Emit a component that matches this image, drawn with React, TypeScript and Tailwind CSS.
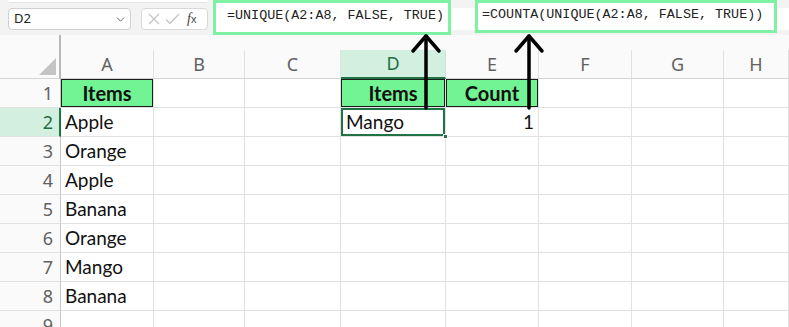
import { ChevronDown } from 'lucide-react';

const cols = ['A', 'B', 'C', 'D', 'E', 'F', 'G', 'H'];
const rows = [1, 2, 3, 4, 5, 6, 7, 8, 9];
const items = ['Apple', 'Orange', 'Apple', 'Banana', 'Orange', 'Mango', 'Banana'];

const Arrow = ({ x }: { x: number }) => (
  <svg className="absolute top-0 left-0 pointer-events-none" width="789" height="327">
    <line x1={x} y1={36} x2={x} y2={108} stroke="#000" strokeWidth="3.5" strokeLinecap="round" />
    <polyline
      points={`${x - 13},${51} ${x},${36} ${x + 13},${51}`}
      fill="none"
      stroke="#000"
      strokeWidth="3.5"
      strokeLinecap="round"
      strokeLinejoin="round"
    />
  </svg>
);

const Cell = ({ children, className = '' }: { children?: React.ReactNode; className?: string }) => (
  <div className={`h-[29px] border-r border-b border-[#e1e1e1] flex items-center ${className}`}>{children}</div>
);

export default function App() {
  return (
    <div className="relative w-[789px] h-[327px] overflow-hidden bg-white font-['Lato',sans-serif] text-[19px] text-[#111]">
      {/* formula bar */}
      <div className="relative h-[35px] bg-[#f3f3f3] flex items-start">
        <div className="absolute top-0 left-[8px] w-[200px] h-[3px] bg-white rounded-b-md border-b border-[#e4e4e4]" />
        <div className="ml-[8px] mt-[8px] w-[123px] h-[22px] bg-white border border-[#d0d0d0] rounded-[4px] flex items-center justify-between pl-[5px] pr-[3px]">
          <span className="font-['Noto_Sans',sans-serif] text-[13px] text-[#222]">D2</span>
          <ChevronDown className="w-[13px] h-[13px] text-[#555]" strokeWidth={1.6} />
        </div>
        <div className="ml-[10px] mt-[8px] w-[67px] h-[22px] bg-white border border-[#d8d8d8] rounded-[4px] flex items-center pl-[6px] gap-[5px]">
          <svg width="12" height="12" viewBox="0 0 12 12">
            <path d="M1 1L11 11M11 1L1 11" stroke="#c4c4c4" strokeWidth="1.3" />
          </svg>
          <svg width="15" height="12" viewBox="0 0 15 12">
            <path d="M1 6.5L5 10.5L14 1" stroke="#c4c4c4" strokeWidth="1.3" fill="none" />
          </svg>
          <span className="ml-[2px] font-['Liberation_Serif',serif] italic text-[14px] text-[#444] leading-none">
            f<span className="text-[11px] not-italic font-['Liberation_Sans',sans-serif]">x</span>
          </span>
        </div>
        <div className="ml-[5px] w-[238px] h-[35px] bg-white border-[3px] border-[#7ef2a2] flex items-center pl-[11px] pb-[2px]">
          <span className="font-['Liberation_Mono',monospace] text-[13.4px] text-[#222]">=UNIQUE(A2:A8, FALSE, TRUE)</span>
        </div>
        <div className="w-[24px] mt-[8px] h-[22px] bg-white" />
        <div className="w-[302px] h-[33px] bg-white border-[3px] border-[#7ef2a2] flex items-center pl-[4px] pb-[2px]">
          <span className="font-['Liberation_Mono',monospace] text-[13.4px] text-[#222]">=COUNTA(UNIQUE(A2:A8, FALSE, TRUE))</span>
        </div>
        <div className="flex-1 mt-[8px] h-[22px] bg-white" />
      </div>

      {/* grid */}
      <div className="grid grid-cols-[61px_93px_91px_96px_105px_93px_93px_92px_65px]">
        {/* header row */}
        <div className="relative h-[44px] border-r-[2px] border-[#b8b8b8] border-b border-b-[#d4d4d4] bg-[#fafafa]">
          <div className="absolute right-[3px] bottom-[3px] w-0 h-0 border-l-[17px] border-l-transparent border-b-[17px] border-b-[#c4c4c4]" />
        </div>
        {cols.map((c) => (
          <div key={c} className="h-[44px] flex flex-col bg-[#fafafa]">
            <div className="h-[15px]" />
            {c === 'D' ? (
              <div className="h-[29px] bg-[#d3efdf] border-r border-[#cfe5d8] border-b-[2px] border-b-[#217346] flex items-center justify-center text-[#1f6e43] font-['Noto_Sans',sans-serif] text-[18px]">
                {c}
              </div>
            ) : (
              <div className="h-[29px] border-r border-[#e1e1e1] border-b border-b-[#d4d4d4] flex items-center justify-center text-[#616161] font-['Noto_Sans',sans-serif] text-[18px]">
                {c}
              </div>
            )}
          </div>
        ))}

        {/* rows */}
        {rows.map((r) => {
          const cells = [];
          cells.push(
            r === 2 ? (
              <div key="h" className="h-[29px] bg-[#d3efdf] border-r-[2px] border-[#217346] border-b border-b-[#e1e1e1] flex items-center justify-end pr-[6px] text-[#1f6e43] font-['Noto_Sans',sans-serif] text-[18px]">
                {r}
              </div>
            ) : (
              <div key="h" className="h-[29px] bg-[#fafafa] border-r border-[#c8c8c8] border-b border-b-[#e1e1e1] flex items-center justify-end pr-[7px] text-[#616161] font-['Noto_Sans',sans-serif] text-[18px]">
                {r}
              </div>
            )
          );
          // A
          if (r === 1) {
            cells.push(
              <Cell key="A" className="bg-[#72f394] shadow-[inset_0_0_0_1px_#1c1c1c] justify-center font-bold text-[20px]">
                Items
              </Cell>
            );
          } else {
            cells.push(
              <Cell key="A" className="pl-[4px]">
                {items[r - 2] ?? ''}
              </Cell>
            );
          }
          cells.push(<Cell key="B" />);
          cells.push(<Cell key="C" />);
          if (r === 1) {
            cells.push(
              <Cell key="D" className="bg-[#72f394] shadow-[inset_0_0_0_1px_#1c1c1c] justify-center font-bold text-[20px]">
                Items
              </Cell>
            );
            cells.push(
              <Cell key="E" className="bg-[#72f394] shadow-[inset_0_0_0_1px_#1c1c1c] justify-center font-bold text-[20px]">
                Count
              </Cell>
            );
          } else if (r === 2) {
            cells.push(
              <Cell key="D" className="relative shadow-[inset_0_0_0_2px_#217346] pl-[5px]">
                Mango
                <div className="absolute right-[-3px] bottom-[-3px] w-[5px] h-[5px] bg-[#217346] border border-white z-10" />
              </Cell>
            );
            cells.push(
              <Cell key="E" className="justify-end pr-[4px]">
                1
              </Cell>
            );
          } else {
            cells.push(<Cell key="D" />);
            cells.push(<Cell key="E" />);
          }
          cells.push(<Cell key="F" />);
          cells.push(<Cell key="G" />);
          cells.push(<Cell key="H" />);
          return cells;
        })}
      </div>

      <Arrow x={426} />
      <Arrow x={529} />
    </div>
  );
}
